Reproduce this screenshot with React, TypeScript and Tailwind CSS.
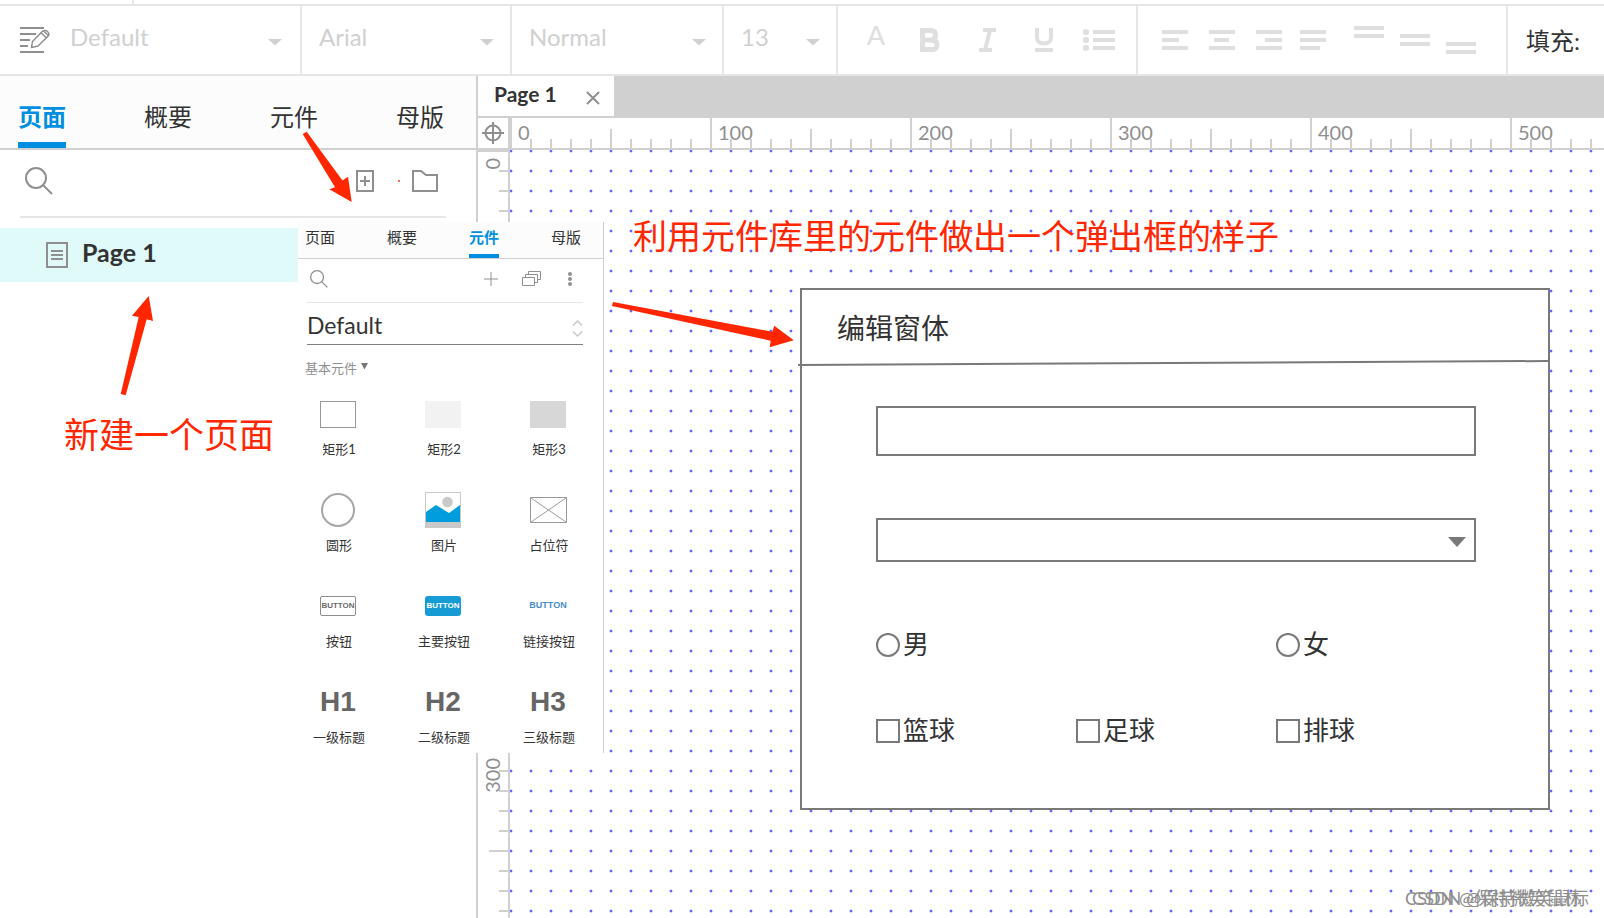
import React, { useState } from "react";

type IconProps = { className?: string };

const panelTabs = [
  { id: "pages", label: "页面" },
  { id: "outline", label: "概要" },
  { id: "widgets", label: "元件" },
  { id: "masters", label: "母版" },
];

const styleSelects = [
  { id: "font", label: "Arial", width: "w-[210px]" },
  { id: "weight", label: "Normal", width: "w-[212px]" },
  { id: "size", label: "13", width: "w-[114px]" },
];

const sports = ["篮球", "足球", "排球"];
const columnUnits = [0, 100, 200, 300, 400, 500];
const rowUnits = [0, 100, 200, 300];
const rulerCells = [0, 1, 2, 3, 4, 5, 6, 7, 8, 9];

const Caret = ({ className = "" }: IconProps) => (
  <svg className={`pointer-events-none absolute ${className}`} width="14" height="7" viewBox="0 0 14 7">
    <path d="M0 0H14L7 6.5Z" fill="currentColor" />
  </svg>
);

const SearchIcon = ({ className = "" }: IconProps) => (
  <svg className={className} viewBox="0 0 28 28" fill="none" stroke="#8f8f8f" strokeWidth="2">
    <circle cx="11" cy="11" r="10" />
    <path d="M18.500 18.500L27 27" />
  </svg>
);

const ParagraphStyleIcon = () => (
  <svg className="shrink-0" width="30" height="26" viewBox="0 0 30 26" fill="none" stroke="#8f8f8f" strokeWidth="2">
    <path d="M0 1H24M0 7H16M0 13H10M0 19H8M0 25H24" />
    <path
      strokeWidth="1.500"
      strokeLinejoin="round"
      d="M11.500 20.500L12.500 14.500L22.500 4.200Q25.500 2.500 27.500 4.500Q30 7 28 9.200L18 19L11.500 20.500ZM21 5.800L26.500 11M23.500 4L28.300 8.500"
    />
  </svg>
);

const AlignIcon = ({ d }: { d: string }) => (
  <svg width="32" height="32" viewBox="0 0 32 32" fill="none" stroke="#dfdfdf" strokeWidth="4">
    <path d={d} />
  </svg>
);

const alignTools = [
  { label: "左对齐", d: "M2 8H28M2 16H19M2 24H28" },
  { label: "居中对齐", d: "M3 8H29M8 16H23M3 24H29" },
  { label: "右对齐", d: "M4 8H30M13 16H30M4 24H30" },
  { label: "两端对齐", d: "M2 8H28M2 16H28M2 24H22" },
];

const verticalTools = [
  { label: "顶部对齐", d: "M0 4H30M0 12H30" },
  { label: "垂直居中", d: "M0 12H30M0 20H30" },
  { label: "底部对齐", d: "M0 20H30M0 28H30" },
];

const Toolbar = () => (
  <header className="flex h-[72px] shrink-0 overflow-hidden border-y-2 border-[#e6e6e6] bg-white text-2xl text-[#d0d0d0]">
    <div className="relative flex w-[302px] shrink-0 items-center border-r-2 border-[#e6e6e6] pl-5">
      <ParagraphStyleIcon />
      <select aria-label="样式" className="h-full w-full appearance-none pb-[6px] pl-5 outline-none">
        <option>Default</option>
      </select>
      <Caret className="top-[33px] right-[18px]" />
    </div>
    {styleSelects.map((item) => (
      <div key={item.id} className={`relative shrink-0 border-r-2 border-[#e6e6e6] ${item.width}`}>
        <select aria-label={item.id} className="h-full w-full appearance-none pb-[6px] pl-[17px] outline-none">
          <option>{item.label}</option>
        </select>
        <Caret className="top-[33px] right-4" />
      </div>
    ))}

    {/* text format */}
    <div className="flex w-[300px] shrink-0 items-center border-r-2 border-[#e6e6e6] pl-[26px] text-[#dfdfdf]">
      <button aria-label="文字颜色" className="w-6 pb-[10px] text-[27px] leading-8 font-medium">A</button>
      <button aria-label="粗体" className="ml-8">
        <svg width="20" height="26" viewBox="0 0 20 26" fill="none" stroke="currentColor" strokeWidth="5">
          <path d="M0 3.500H11Q15.500 3.500 15.500 8T11 13H3M3 13H11Q17 13 17 18T11 22.500H0M2.500 1V25" />
        </svg>
      </button>
      <button aria-label="斜体" className="ml-[38px]">
        <svg width="20" height="26" viewBox="0 0 20 26" fill="none" stroke="currentColor" strokeWidth="4">
          <path d="M5 3H18M1 23H14M12 3L7 23" />
        </svg>
      </button>
      <button aria-label="下划线" className="ml-9">
        <svg width="20" height="26" viewBox="0 0 20 26" fill="none" stroke="currentColor" strokeWidth="4">
          <path d="M3 1V10Q3 16.500 10 16.500T17 10V1M1 23H19" />
        </svg>
      </button>
      <button aria-label="项目符号" className="ml-[29px]">
        <svg width="32" height="24" viewBox="0 0 32 24" fill="currentColor">
          <circle cx="3" cy="4" r="3" />
          <circle cx="3" cy="12" r="3" />
          <circle cx="3" cy="20" r="3" />
          <path d="M10 2H32V6H10ZM10 10H32V14H10ZM10 18H32V22H10Z" />
        </svg>
      </button>
    </div>

    {/* alignment */}
    <div className="flex w-[370px] shrink-0 items-center border-r-2 border-[#e6e6e6] pl-[22px]">
      <div className="flex gap-[14px]">
        {alignTools.map((tool) => (
          <button key={tool.label} aria-label={tool.label}>
            <AlignIcon d={tool.d} />
          </button>
        ))}
      </div>
      <div className="ml-6 flex gap-[14px]">
        {verticalTools.map((tool) => (
          <button key={tool.label} aria-label={tool.label}>
            <AlignIcon d={tool.d} />
          </button>
        ))}
      </div>
    </div>
    <div className="flex items-center pt-[2px] pl-[18px] whitespace-nowrap text-[#333]">填充:</div>
  </header>
);

const PagesPanel = () => {
  const [activeTab, setActiveTab] = useState("pages");

  return (
    <aside className="w-[478px] shrink-0 border-r-2 border-[#d0d0d0] bg-white">
      <nav className="flex h-[74px] items-stretch justify-between border-b-2 border-[#d0d0d0] bg-[#fcfcfc] pr-8 pl-[18px]">
        {panelTabs.map((tab) => (
          <button
            key={tab.id}
            className={`border-b-[6px] pt-4 text-2xl ${
              activeTab === tab.id
                ? "border-[#008fe0] font-bold text-[#008fe0]"
                : "border-transparent text-[#333]"
            }`}
            onClick={() => setActiveTab(tab.id)}
          >
            {tab.label}
          </button>
        ))}
      </nav>

      <div className="mr-[30px] ml-5 flex h-[68px] items-center border-b-2 border-[#e6e6e6] pr-2 pb-1 pl-[5px]">
        <button aria-label="搜索">
          <SearchIcon className="size-7" />
        </button>
        <button aria-label="新建页面" className="ml-auto">
          <svg width="18" height="22" viewBox="0 0 18 22" fill="none" stroke="#8f8f8f" strokeWidth="2">
            <path d="M1 1H17V21H1ZM4 11H14M9 6V16" />
          </svg>
        </button>
        <span className="ml-6 size-[2px] bg-[#ff6a50]" />
        <button aria-label="新建文件夹" className="ml-3">
          <svg width="26" height="22" viewBox="0 0 26 22" fill="none" stroke="#8f8f8f" strokeWidth="2">
            <path d="M1 1H9L14 5H25V21H1Z" />
          </svg>
        </button>
      </div>

      <button className="mt-[10px] flex h-[54px] w-full items-center gap-[14px] bg-[#e0fafa] pl-[46px] text-[25px] font-bold text-[#333]">
        <svg width="22" height="26" viewBox="0 0 22 26" fill="none" stroke="#8f8f8f" strokeWidth="2">
          <path d="M1 1H21V25H1ZM5 9H17M5 13H17M5 17H17" />
        </svg>
        <span className="pb-1">Page 1</span>
      </button>
    </aside>
  );
};

const widgets = [
  { label: "矩形1", icon: <span className="h-[27px] w-9 border border-[#999]" /> },
  { label: "矩形2", icon: <span className="h-[27px] w-9 bg-[#f2f2f2]" /> },
  { label: "矩形3", icon: <span className="h-[27px] w-9 bg-[#d7d7d7]" /> },
  { label: "圆形", icon: <span className="size-[34px] rounded-full border-2 border-[#a6a6a6]" /> },
  {
    label: "图片",
    icon: (
      <svg width="36" height="36" viewBox="0 0 36 36">
        <path d="M0.500 0.500H35.500V35.500H0.500Z" fill="#fff" stroke="#c9c9c9" />
        <circle cx="22.500" cy="10" r="5.300" fill="#c9c9c9" />
        <path d="M1 20L11 13L24 21L35 13V30H1Z" fill="#009ddc" />
        <path d="M0 30H36V36H0Z" fill="#c9c9c9" />
      </svg>
    ),
  },
  {
    label: "占位符",
    icon: (
      <svg width="37" height="26" viewBox="0 0 37 26" fill="none" stroke="#999">
        <path d="M0.500 0.500H36.500V25.500H0.500ZM1 1L36 25M36 1L1 25" />
      </svg>
    ),
  },
  {
    label: "按钮",
    icon: (
      <span className="flex h-5 w-9 items-center justify-center rounded-[2px] border border-[#8c8c8c] text-[8px] font-bold text-[#6b6b6b]">
        BUTTON
      </span>
    ),
  },
  {
    label: "主要按钮",
    icon: (
      <span className="flex h-5 w-9 items-center justify-center rounded-[3px] bg-[#169bd5] text-[8px] font-bold text-white">
        BUTTON
      </span>
    ),
  },
  { label: "链接按钮", icon: <span className="text-[9px] font-bold text-[#4a8bd0]">BUTTON</span> },
  { label: "一级标题", icon: <span className="text-[28px] font-bold text-[#666]">H1</span> },
  { label: "二级标题", icon: <span className="text-[28px] font-bold text-[#666]">H2</span> },
  { label: "三级标题", icon: <span className="text-[28px] font-bold text-[#666]">H3</span> },
];

const WidgetsPanel = () => {
  const [activeTab, setActiveTab] = useState("widgets");

  return (
    <section className="absolute top-[222px] left-[298px] h-[531px] w-[306px] border-r border-[#d0d0d0] bg-white">
      <nav className="flex h-[37px] items-stretch justify-between border-b border-[#d0d0d0] bg-[#fcfcfc] pr-[22px] pl-[7px]">
        {panelTabs.map((tab) => (
          <button
            key={tab.id}
            className={`border-b-4 pb-[2px] text-[15px] leading-[30px] ${
              activeTab === tab.id
                ? "border-[#008fe0] font-bold text-[#008fe0]"
                : "border-transparent text-[#333]"
            }`}
            onClick={() => setActiveTab(tab.id)}
          >
            {tab.label}
          </button>
        ))}
      </nav>

      <div className="mr-5 ml-[9px] flex h-11 items-center border-b border-[#e6e6e6] pr-[11px] pb-1 pl-[3px]">
        <button aria-label="搜索元件" className="mr-auto">
          <SearchIcon className="size-[18px]" />
        </button>
        <button aria-label="添加元件库">
          <svg width="14" height="14" viewBox="0 0 14 14" stroke="#8f8f8f">
            <path d="M0 7H14M7 0V14" />
          </svg>
        </button>
        <button aria-label="管理元件库" className="ml-6">
          <svg width="19" height="16" viewBox="0 0 19 16" fill="none" stroke="#8f8f8f">
            <path d="M0.500 6.500H12.500V14.500H0.500ZM3.500 6V3.500H15.500V11.500H13M6.500 3V0.500H18.500V8.500H16" />
          </svg>
        </button>
        <button aria-label="更多" className="ml-[27px]">
          <svg width="4" height="14" viewBox="0 0 4 14" fill="#8f8f8f">
            <circle cx="2" cy="2" r="2" />
            <circle cx="2" cy="7" r="2" />
            <circle cx="2" cy="12" r="2" />
          </svg>
        </button>
      </div>

      <div className="relative mr-5 ml-[9px] h-[42px] border-b border-[#808080]">
        <select aria-label="元件库" className="h-full w-full appearance-none pt-1 text-[23px] text-[#333] outline-none">
          <option>Default</option>
        </select>
        <svg className="pointer-events-none absolute right-0 bottom-[7px]" width="11" height="17" viewBox="0 0 11 17" fill="none" stroke="#c9c9c9" strokeWidth="1.500">
          <path d="M1 5.500L5.500 1L10 5.500M1 11.500L5.500 16L10 11.500" />
        </svg>
      </div>

      <button className="mt-[11px] ml-[7px] flex items-center gap-1 text-[13px] leading-6 text-[#8f8f8f]">
        基本元件
        <svg className="mb-1" width="7" height="7" viewBox="0 0 7 7">
          <path d="M0 0H7L3.500 6.500Z" fill="#777" />
        </svg>
      </button>

      <div className="mt-[11px] mr-7 ml-[15px] grid grid-cols-[52px_52px_52px] justify-between">
        {widgets.map((item) => (
          <button key={item.label} className="flex h-24 flex-col items-center text-[#333]">
            <span className="flex h-[46px] w-[50px] items-center justify-center pr-[2px] font-['Liberation_Sans',sans-serif]">
              {item.icon}
            </span>
            <span className="text-[13px] leading-6 whitespace-nowrap">{item.label}</span>
          </button>
        ))}
      </div>
    </section>
  );
};

const HorizontalRuler = () => (
  <div className="flex h-8 min-w-0 flex-1 overflow-hidden border-b-2 border-[#d0d0d0]">
    {columnUnits.map((unit) => (
      <div key={unit} className="relative flex shrink-0 items-end">
        {rulerCells.map((n) => (
          <span
            key={n}
            className={`w-5 border-l-2 border-[#d0d0d0] ${n === 0 ? "h-[30px]" : n === 5 ? "h-[19px]" : "h-[9px]"}`}
          />
        ))}
        <span className="absolute top-0 left-2 text-xl leading-7 text-[#8f8f8f]">{unit}</span>
      </div>
    ))}
  </div>
);

const VerticalRuler = () => (
  <div className="w-8 shrink-0 overflow-hidden border-r-2 border-[#d0d0d0] bg-white">
    {rowUnits.map((unit) => (
      <div key={unit} className="relative flex flex-col items-end">
        {rulerCells.map((n) => (
          <span
            key={n}
            className={`h-5 border-t-2 border-[#d0d0d0] ${n === 0 ? "w-[30px]" : n === 5 ? "w-[19px]" : "w-[9px]"}`}
          />
        ))}
        <span className="absolute top-2 left-0 rotate-180 text-xl leading-7 text-[#8f8f8f] [writing-mode:vertical-rl]">
          {unit}
        </span>
      </div>
    ))}
  </div>
);

const FormDialog = () => (
  <form className="absolute top-[138px] left-[290px] w-[750px] border-2 border-[#797979] bg-white pb-[65px] text-[26px] text-[#333]">
    <h2 className="h-[73px] pl-[35px] text-[28px] leading-[76px]">编辑窗体</h2>
    <svg className="absolute top-[68px] -left-1" width="750" height="8" viewBox="0 0 750 8">
      <path d="M0 7L750 3" stroke="#797979" strokeWidth="2" />
    </svg>
    <div className="pr-[72px] pl-[74px]">
      <input
        type="text"
        aria-label="文本框"
        className="mt-[43px] block h-[50px] w-full border-2 border-[#797979] px-3 outline-none"
      />
      <div className="relative mt-[62px]">
        <select
          aria-label="下拉列表"
          className="block h-11 w-full appearance-none border-2 border-[#797979] px-3 outline-none"
        >
          <option></option>
        </select>
        <svg className="pointer-events-none absolute top-[19px] right-[10px]" width="18" height="10" viewBox="0 0 18 10">
          <path d="M0 0H18L9 10Z" fill="#797979" />
        </svg>
      </div>
      <div className="mt-[71px] grid grid-cols-3">
        <label className="flex items-center gap-[3px] leading-6">
          <input type="radio" name="gender" className="size-6 appearance-none rounded-full border-2 border-[#797979] checked:bg-[#797979]" />
          <span className="-mt-[2px]">男</span>
        </label>
        <label className="col-start-3 flex items-center gap-[3px] leading-6">
          <input type="radio" name="gender" className="size-6 appearance-none rounded-full border-2 border-[#797979] checked:bg-[#797979]" />
          <span className="-mt-[2px]">女</span>
        </label>
      </div>
      <div className="mt-[62px] grid grid-cols-3">
        {sports.map((sport) => (
          <label key={sport} className="flex items-center gap-[3px] leading-6">
            <input type="checkbox" className="size-6 appearance-none border-2 border-[#797979] checked:bg-[#797979]" />
            <span className="-mt-[2px]">{sport}</span>
          </label>
        ))}
      </div>
    </div>
  </form>
);

const Workspace = () => (
  <main className="flex min-w-0 flex-1 flex-col">
    <div className="flex h-[42px] shrink-0 border-b-2 border-[#d0d0d0] bg-[#d0d0d0]">
      <div className="flex w-[136px] items-center justify-between bg-white pr-[14px] pl-4 text-[21px] font-bold text-[#333]">
        <span className="pb-1">Page 1</span>
        <button aria-label="关闭" className="pt-[3px]">
          <svg width="14" height="14" viewBox="0 0 14 14" stroke="#8f8f8f" strokeWidth="2">
            <path d="M1 1L13 13M13 1L1 13" />
          </svg>
        </button>
      </div>
    </div>

    <div className="flex shrink-0">
      <div className="flex size-8 items-center justify-center border-r-2 border-b-2 border-[#d0d0d0]">
        <svg width="22" height="22" viewBox="0 0 22 22" fill="none" stroke="#8f8f8f" strokeWidth="2">
          <circle cx="11" cy="11" r="7.500" />
          <path d="M0 11H22M11 0V22" />
        </svg>
      </div>
      <HorizontalRuler />
    </div>

    <div className="flex min-h-0 flex-1">
      <VerticalRuler />
      <div className="relative min-w-0 flex-1 overflow-hidden bg-[radial-gradient(circle,#6464ff_1px,#6464ff40_1.600px,transparent_2px)] bg-[length:20px_20px] bg-[position:-9px_-9px]">
        <FormDialog />
        <p className="absolute right-[22px] bottom-2 text-lg leading-6 whitespace-nowrap text-[#8f8f8f] [text-shadow:7px_0_#8f8f8f]">
          CSDN @保持微笑鼠标
        </p>
      </div>
    </div>
  </main>
);

const Annotations = () => (
  <div className="pointer-events-none absolute inset-0 leading-10 whitespace-nowrap text-[#ff2600]">
    <svg className="absolute top-0 left-0" width="800" height="400" viewBox="0 0 800 400" fill="#ff2600">
      <path d="M302.700 134L306.700 131.700L342.500 180.500L348 176.700L351.700 202L329.300 189.300L335 187.300Z" />
      <path d="M120.700 394L125.700 395.300L146.700 319.300L153 321L148.700 296L132 315.700L138.700 317Z" />
      <path d="M613 302L612 306L770.700 340.700L769.700 347.300L793.700 340.300L774.300 325.700L772.300 331.700Z" />
    </svg>
    <p className="absolute top-[414px] left-16 text-[35px]">新建一个页面</p>
    <p className="absolute top-[216px] left-[633px] text-[34px]">利用元件库里的元件做出一个弹出框的样子</p>
  </div>
);

const App = () => {
  return (
    <div className="relative flex h-screen flex-col overflow-hidden bg-white font-['Lato','Noto_Sans_CJK_SC',sans-serif]">
      <div className="h-1 shrink-0">
        <div className="h-full w-[134px] border-r-2 border-[#e6e6e6]" />
      </div>
      <Toolbar />
      <div className="flex min-h-0 flex-1">
        <PagesPanel />
        <Workspace />
      </div>
      <WidgetsPanel />
      <Annotations />
    </div>
  );
};

export default App;
